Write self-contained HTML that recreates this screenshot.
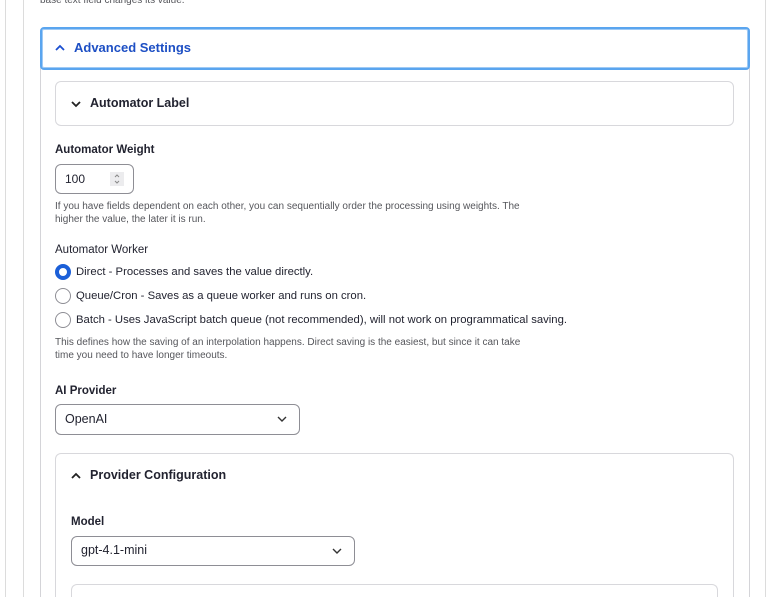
<!DOCTYPE html>
<html style="width:781px;height:597px;overflow:hidden"><head><style>
*{box-sizing:border-box;margin:0;padding:0}
body{width:781px;height:597px;overflow:hidden;background:#fff;font-family:"Liberation Sans",sans-serif;color:#222330;position:relative}
.abs{position:absolute}
.vl{position:absolute;top:0;height:597px;width:1px;background:#dcdcdc}
.lbl{position:absolute;font-size:12px;font-weight:bold;color:#222330}
.desc{position:absolute;font-size:10px;color:#55565b;line-height:13px}
.radio{position:absolute;width:16px;height:16px;border:1px solid #8e8e95;border-radius:50%;background:#fff}
.rt{position:absolute;font-size:12px;color:#222330}
</style></head><body>
<div class="vl" style="left:5px"></div>
<div class="vl" style="left:23px"></div>
<div class="vl" style="left:765px"></div>
<div class="desc" style="left:40px;top:-6px">base text field changes its value.</div>

<div class="abs" style="left:40px;top:60px;width:710px;height:537px;border:1px solid #d4d4d8;border-top:none;border-bottom:none"></div>
<div class="abs" style="left:40px;top:27px;width:710px;height:43px;border:2px solid #5aa5ef;border-radius:4px;background:#fff;box-shadow:inset 0 0 0 1px #9fcaf5"></div>
<svg class="abs" style="left:54px;top:43px" width="12" height="10" viewBox="0 0 12 10"><path d="M2 7 L6 3 L10 7" fill="none" stroke="#1b4fd0" stroke-width="1.8"/></svg>
<div class="abs" style="left:74px;top:40px;font-size:13px;font-weight:bold;color:#1d4fc4">Advanced Settings</div>

<div class="abs" style="left:55px;top:81px;width:679px;height:45px;border:1px solid #d8d8dc;border-radius:6px"></div>
<svg class="abs" style="left:70px;top:99px" width="12" height="10" viewBox="0 0 12 10"><path d="M2 3 L6 7 L10 3" fill="none" stroke="#222" stroke-width="1.8"/></svg>
<div class="abs" style="left:90px;top:96px;font-size:12.5px;font-weight:bold">Automator Label</div>

<div class="lbl" style="left:55px;top:144px;font-size:11.5px">Automator Weight</div>
<div class="abs" style="left:55px;top:164px;width:79px;height:30px;border:1px solid #8e8e95;border-radius:6px"></div>
<div class="abs" style="left:65px;top:172px;font-size:12px">100</div>
<div class="abs" style="left:110px;top:172px;width:14px;height:14px;background:#ececee"></div>
<svg class="abs" style="left:112px;top:172px" width="10" height="14" viewBox="0 0 10 14"><path d="M3 5 L5 3 L7 5 M3 9 L5 11 L7 9" fill="none" stroke="#888" stroke-width="1"/></svg>
<div class="desc" style="left:55px;top:200px">If you have fields dependent on each other, you can sequentially order the processing using weights. The<br>higher the value, the later it is run.</div>

<div class="abs" style="left:55px;top:244px;font-size:11.5px">Automator Worker</div>
<div class="radio" style="left:55px;top:264px;border:4px solid #1b5fd8"></div>
<div class="rt" style="left:76px;top:266px;font-size:11.3px">Direct - Processes and saves the value directly.</div>
<div class="radio" style="left:55px;top:288px"></div>
<div class="rt" style="left:76px;top:290px;font-size:11.3px">Queue/Cron - Saves as a queue worker and runs on cron.</div>
<div class="radio" style="left:55px;top:312px"></div>
<div class="rt" style="left:76px;top:314px;font-size:11.3px">Batch - Uses JavaScript batch queue (not recommended), will not work on programmatical saving.</div>
<div class="desc" style="left:55px;top:336px">This defines how the saving of an interpolation happens. Direct saving is the easiest, but since it can take<br>time you need to have longer timeouts.</div>

<div class="lbl" style="left:55px;top:385px;font-size:11.5px">AI Provider</div>
<div class="abs" style="left:55px;top:404px;width:245px;height:31px;border:1px solid #8e8e95;border-radius:6px"></div>
<div class="abs" style="left:65px;top:412px;font-size:12.5px">OpenAI</div>
<svg class="abs" style="left:276px;top:414px" width="12" height="10" viewBox="0 0 12 10"><path d="M2 3 L6 7 L10 3" fill="none" stroke="#333" stroke-width="1.4"/></svg>

<div class="abs" style="left:55px;top:453px;width:679px;height:144px;border:1px solid #d8d8dc;border-bottom:none;border-radius:6px 6px 0 0"></div>
<svg class="abs" style="left:70px;top:471px" width="12" height="10" viewBox="0 0 12 10"><path d="M2 7 L6 3 L10 7" fill="none" stroke="#222" stroke-width="1.8"/></svg>
<div class="abs" style="left:90px;top:468px;font-size:12.5px;font-weight:bold">Provider Configuration</div>
<div class="lbl" style="left:71px;top:516px;font-size:11.5px">Model</div>
<div class="abs" style="left:71px;top:536px;width:284px;height:30px;border:1px solid #8e8e95;border-radius:6px"></div>
<div class="abs" style="left:81px;top:543px;font-size:12.5px">gpt-4.1-mini</div>
<svg class="abs" style="left:331px;top:546px" width="12" height="10" viewBox="0 0 12 10"><path d="M2 3 L6 7 L10 3" fill="none" stroke="#333" stroke-width="1.4"/></svg>
<div class="abs" style="left:71px;top:584px;width:647px;height:13px;border:1px solid #d8d8dc;border-bottom:none;border-radius:6px 6px 0 0"></div>
</body></html>
